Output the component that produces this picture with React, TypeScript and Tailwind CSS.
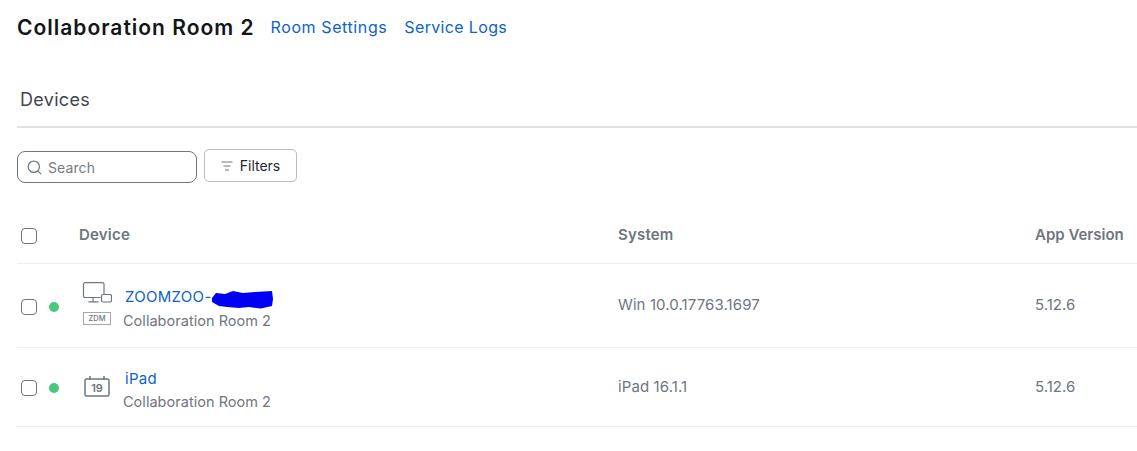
import { Search } from "lucide-react";

const ROWS = [
  { id: "zoomzoo", name: "ZOOMZOO-", redacted: true, system: "Win 10.0.17763.1697", version: "5.12.6" },
  { id: "ipad", name: "iPad", redacted: false, system: "iPad 16.1.1", version: "5.12.6" },
];

function Checkbox() {
  return <span className="block w-4 h-4 border border-[#6e7680] rounded-[4px] bg-white" />;
}

function ZoomRoomIcon() {
  return (
    <div className="flex flex-col items-start gap-[9px] pb-[4px]">
      <svg width="30" height="21" viewBox="0 0 30 21" fill="none" stroke="#6e7680" strokeWidth="1.2">
        <path d="M18.500 15.500H3A1.500 1.500 0 0 1 1.500 14V2A1.500 1.500 0 0 1 3 0.600h17.500A1.500 1.500 0 0 1 22 2v10" />
        <path d="M11 15.500v4M6.500 19.800h10" />
        <rect x="19.500" y="12.500" width="10" height="7.500" rx="1.500" />
      </svg>
      <span className="ml-[1px] flex items-center justify-center w-7 h-[13px] border border-[#a5a9af] text-[7.500px] leading-none font-medium text-[#6e7680]">
        ZDM
      </span>
    </div>
  );
}

function CalendarIcon() {
  return (
    <svg width="26" height="21" viewBox="0 0 26 21" fill="none" className="ml-[2px] mb-[2px]">
      <rect x="1" y="3" width="24" height="17" rx="1.500" stroke="#6e7680" strokeWidth="1.500" />
      <path d="M6 0v4M20 0v4" stroke="#6e7680" strokeWidth="1.500" />
      <text x="13" y="16" textAnchor="middle" fontSize="11" fontWeight="600" fill="#6e7680" fontFamily="Inter, sans-serif">
        19
      </text>
    </svg>
  );
}

function Redaction() {
  return (
    <svg width="62" height="19" viewBox="0 0 62 19" className="ml-[-1px] self-start mt-[2px]">
      <path
        d="M1 8 L5 3 L14 4 L22 1 L32 3 L44 2 L61 1 L62 9 L61 16 L50 18.500 L38 17 L28 18 L16 17 L8 16 L1 12 Z"
        fill="#0000f5"
      />
    </svg>
  );
}

export default function App() {
  return (
    <div className="w-[1137px] h-[451px] overflow-hidden bg-white pl-[17px] font-['Inter',sans-serif]">
      <div className="flex items-center h-[54px]">
        <h1 className="text-[21px] font-semibold text-[#131619] tracking-[1px] mr-[16px] pt-[1px]">Collaboration Room 2</h1>
        <a className="text-[16px] text-[#0e62c9] tracking-[0.6px] mr-[17px]">Room Settings</a>
        <a className="text-[16px] text-[#0e62c9] tracking-[0.35px]">Service Logs</a>
      </div>

      <div className="mt-[18px] h-[56px] border-b-2 border-[#dfe1e5] pl-[3px] pt-[16px] text-[18px] leading-[24px] tracking-[0.3px] text-[#3f454d]">
        Devices
      </div>

      <div className="flex items-center gap-[7px] mt-[23px]">
        <div className="flex items-center w-[180px] h-[32px] border border-[#6e7680] rounded-[8px] pl-[8px]">
          <Search size={17} strokeWidth={1.700} className="text-[#6e7680]" />
          <span className="ml-[5px] text-[14px] tracking-[0.1px] text-[#757a82]">Search</span>
        </div>
        <button className="flex items-center justify-center gap-[7px] w-[93px] h-[33px] border border-[#babcc0] rounded-[5px] text-[14px] text-[#232930] -mt-[3px]">
          <svg width="12" height="10" viewBox="0 0 12 10" stroke="#6e7680" strokeWidth="1">
            <path d="M0.500 1h11M2.500 5h7M4 9h4" />
          </svg>
          Filters
        </button>
      </div>

      <div className="mt-[29px] grid grid-cols-[62px_539px_417px_1fr] items-center h-[52px] border-b border-[#ecedf0] text-[15px] font-semibold text-[#6e7680]">
        <div className="pl-[4px] pb-[3px]">
          <Checkbox />
        </div>
        <div className="pb-[4px] tracking-[0.2px]">Device</div>
        <div className="pb-[4px] tracking-[0.2px]">System</div>
        <div className="pb-[4px]">App Version</div>
      </div>

      {ROWS.map((row) => (
        <div
          key={row.id}
          className={`grid grid-cols-[62px_539px_417px_1fr] items-center border-b border-[#ecedf0] text-[15px] text-[#6e7680] ${row.redacted ? "h-[84px]" : "h-[79px]"}`}
        >
          <div className="flex items-center pl-[4px] gap-[12px] pt-[2px]">
            <Checkbox />
            <span className="w-[10px] h-[10px] rounded-full bg-[#48c87a]" />
          </div>
          <div className="flex items-center">
            <div className="w-[45px] flex justify-start pl-[3px]">
              {row.redacted ? <ZoomRoomIcon /> : <CalendarIcon />}
            </div>
            <div className="flex flex-col gap-[3px] pt-[7px]">
              <div className="flex items-center h-[20px] pl-[1px] tracking-[0.3px] text-[#0e62c9]">
                {row.name}
                {row.redacted && <Redaction />}
              </div>
              <div className="text-[14.500px] leading-[20px] -ml-[1px] tracking-[0.03px]">Collaboration Room 2</div>
            </div>
          </div>
          <div className="tracking-[0.1px]">{row.system}</div>
          <div>{row.version}</div>
        </div>
      ))}
    </div>
  );
}
